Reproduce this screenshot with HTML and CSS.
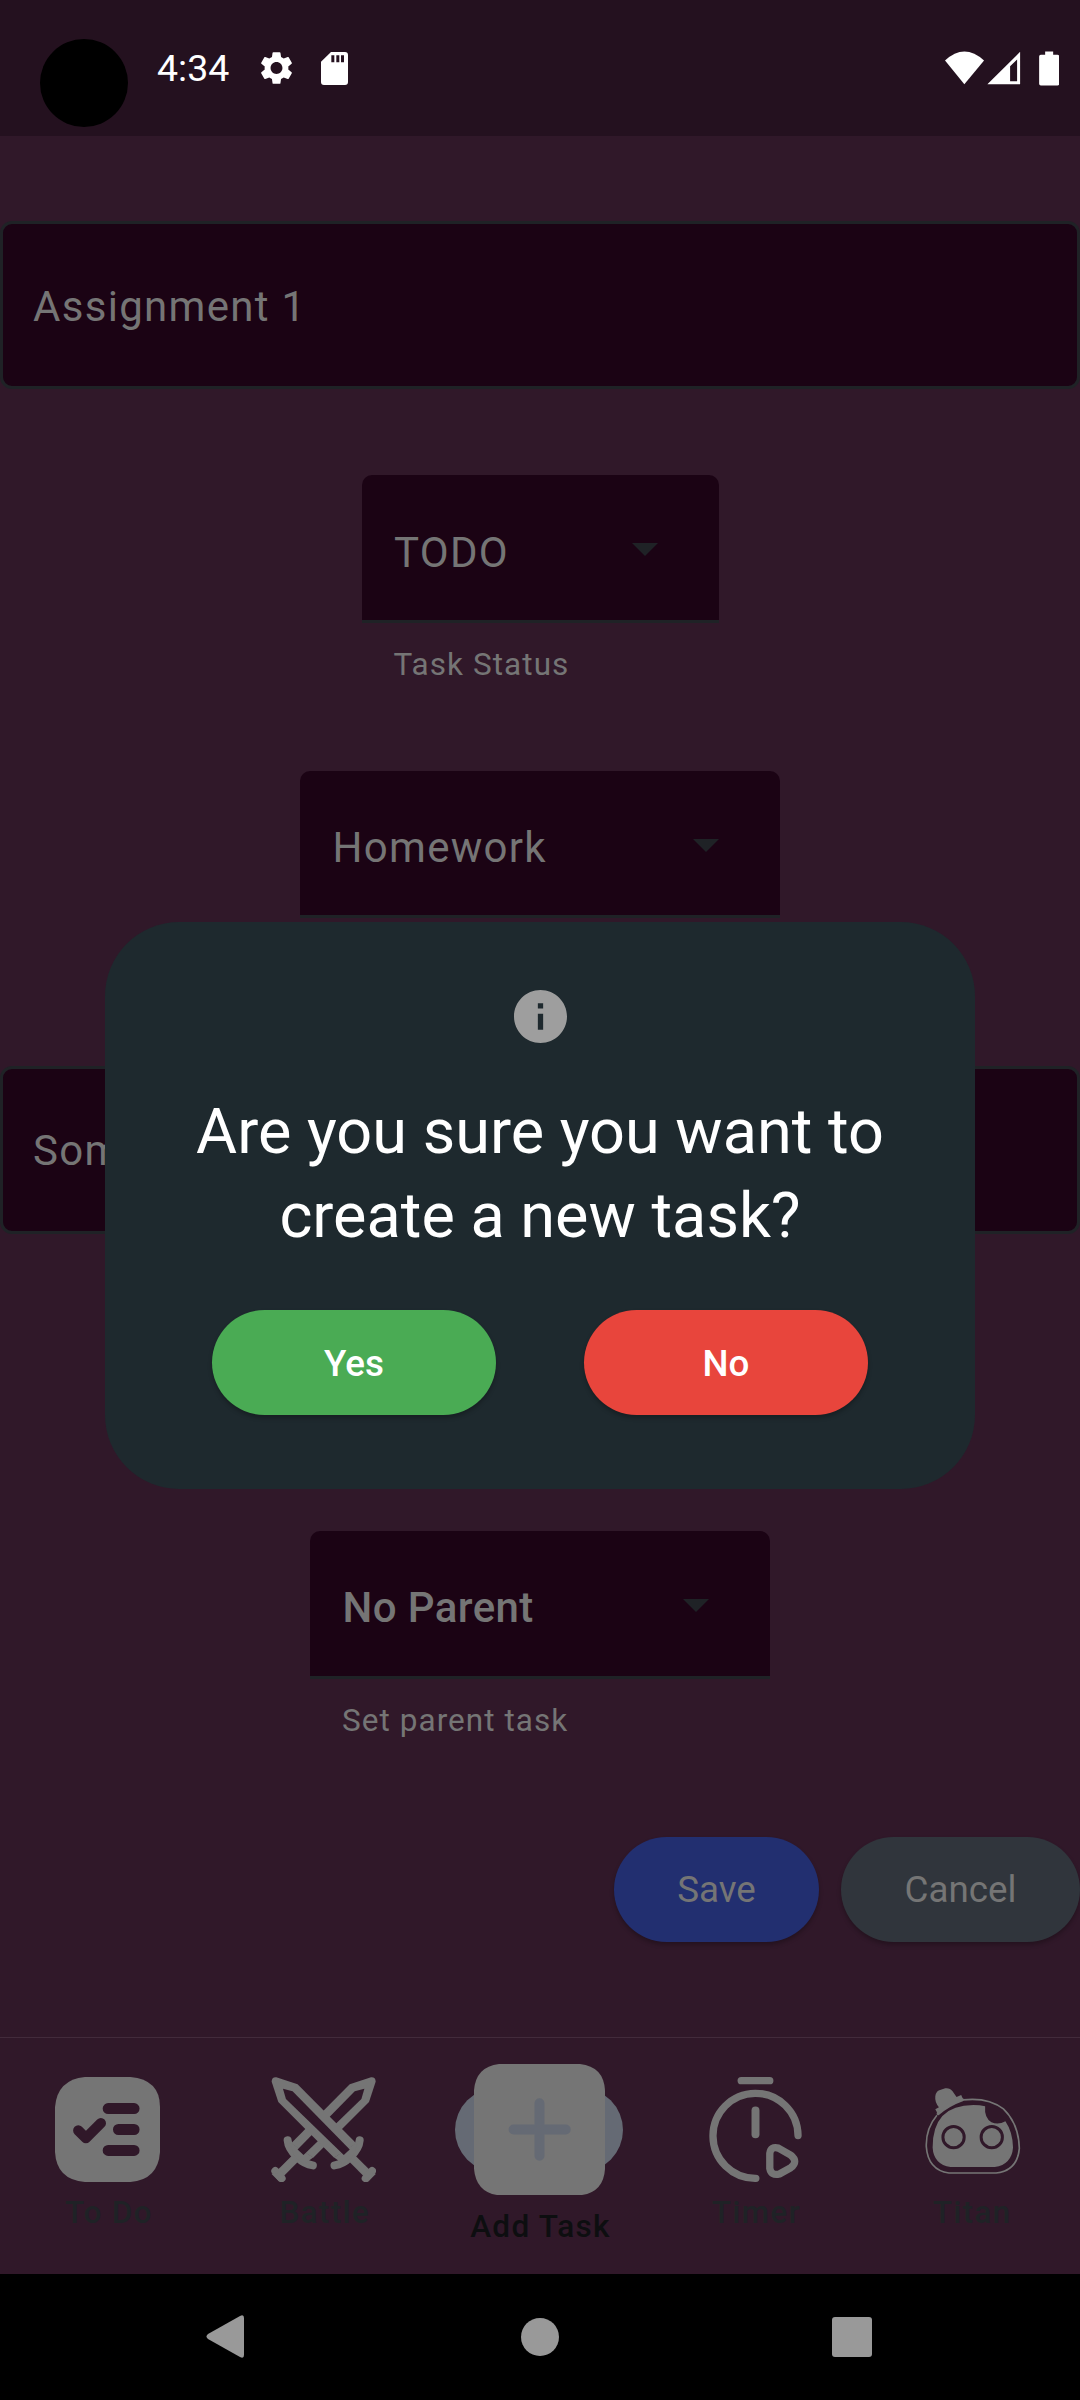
FILE: index.html
```html
<!DOCTYPE html>
<html lang="en">
<head>
<meta charset="utf-8">
<title>New task</title>
<link rel="stylesheet" href="styles.css">
</head>
<body>
<div class="screen">
  <header class="status-bar">
    <span class="camera"></span>
    <span class="clock">4:34</span>
    <svg class="status-gear" viewBox="2 2 20 20"><path fill="#fff" d="M19.14 12.94c.04-.3.06-.61.06-.94 0-.32-.02-.64-.07-.94l2.03-1.58c.18-.14.23-.41.12-.61l-1.92-3.32c-.12-.22-.37-.29-.59-.22l-2.39.96c-.5-.38-1.03-.7-1.62-.94l-.36-2.54c-.04-.24-.24-.41-.48-.41h-3.84c-.24 0-.43.17-.47.41l-.36 2.54c-.59.24-1.13.57-1.62.94l-2.39-.96c-.22-.08-.47 0-.59.22L2.74 8.87c-.12.21-.08.47.12.61l2.03 1.58c-.05.3-.09.63-.09.94s.02.64.07.94l-2.03 1.58c-.18.14-.23.41-.12.61l1.92 3.32c.12.22.37.29.59.22l2.39-.96c.5.38 1.03.7 1.62.94l.36 2.54c.05.24.24.41.48.41h3.84c.24 0 .44-.17.47-.41l.36-2.54c.59-.24 1.13-.56 1.62-.94l2.39.96c.22.08.47 0 .59-.22l1.92-3.32c.12-.22.07-.47-.12-.61l-2.01-1.58zM12 15.6c-1.98 0-3.6-1.62-3.6-3.6s1.62-3.6 3.6-3.6 3.6 1.62 3.6 3.6-1.62 3.6-3.6 3.6z"/></svg>
    <svg class="status-sd" viewBox="0 0 81 99"><path fill="#fff" fill-rule="evenodd" d="M30 0H72Q81 0 81 9V90Q81 99 72 99H9Q0 99 0 90V29ZM31 10V31H40V10ZM46 10V31H55V10ZM60 10V31H69V10Z"/></svg>
    <svg class="status-signals" viewBox="135 152 343 104"><g fill="#fff"><path d="M135 180Q193 126 252 180L193 251Z"/><path fill-rule="evenodd" d="M262 251L360 154V251ZM330 197V242H351V177Z"/><path d="M435 153H459V163H472Q477 163 477 168V250Q477 255 472 255H422Q417 255 417 250V168Q417 163 422 163H435Z"/></g></svg>
  </header>

  <main class="form">
    <div class="text-field">Assignment 1</div>
    <div class="select select-status"><span>TODO</span><i class="arrow"></i></div>
    <div class="hint hint-status">Task Status</div>
    <div class="select select-type"><span>Homework</span><i class="arrow"></i></div>
    <div class="text-field text-field-notes">Some</div>
    <div class="select select-parent"><span>No Parent</span><i class="arrow"></i></div>
    <div class="hint hint-parent">Set parent task</div>
    <div class="actions">
      <button class="pill save">Save</button>
      <button class="pill cancel">Cancel</button>
    </div>
  </main>

  <nav class="tabs">
    <div class="tab">
      <svg viewBox="165 170 316 316"><path fill="#757575" d="M255 170H392Q481 178 481 260V396Q475 480 392 486H255Q170 480 165 396V260Q172 178 255 170Z"/><g stroke="#301829" stroke-width="33" stroke-linecap="round" stroke-linejoin="round" fill="none"><path d="M325 265H403M356 328H403M325 391H403"/><path d="M235 331L258 354L303 309" stroke-width="31"/></g></svg>
      <span>To Do</span>
    </div>
    <div class="tab">
      <svg viewBox="813 170 316 316">
        <defs>
          <g id="sword">
            <path fill="#757575" d="M815 184Q815 170 829 171L893 192L1070 370L1003 413L835 245Z"/>
            <path fill="none" stroke="#757575" stroke-width="24" stroke-linecap="round" d="M1080 360Q1078 386 1051 411Q1030 432 1004 436"/>
            <path fill="#757575" d="M1003 412L1075 365L1058 412L1030 432Z"/>
            <path fill="none" stroke="#757575" stroke-width="26" d="M1055 413L1108 466"/>
            <path fill="none" stroke="#757575" stroke-width="24" stroke-linecap="round" d="M1117 453L1098 475"/>
            <path fill="#757575" d="M1110 462L1129 461L1105 485Z"/>
            <path fill="#301829" d="M849 205L878 213L1050 388L1032 405L858 236Z"/>
          </g>
        </defs>
        <use href="#sword" transform="translate(1943 0) scale(-1 1)"/>
        <use href="#sword"/>
      </svg>
      <span>Battle</span>
    </div>
    <div class="tab tab-active">
      <div class="indicator">
        <svg viewBox="0 0 394 394"><path fill="#757575" d="M75 0H319Q390 8 394 79V315Q390 384 325 394H69Q6 384 0 315V79Q6 8 75 0Z"/><path d="M197 118V276M119 197H276" stroke="#656a74" stroke-width="30" stroke-linecap="round"/></svg>
      </div>
      <span>Add Task</span>
    </div>
    <div class="tab">
      <svg viewBox="70 170 316 316"><g fill="none" stroke="#757575" stroke-width="22" stroke-linecap="round" stroke-linejoin="round"><path d="M185 181H271"/><path d="M228 271V342" stroke-width="24"/><path d="M356 346A128 128 0 1 0 229 475"/><path d="M271 400Q274 378 297 384L334 405Q358 424 334 443L300 462Q275 468 271 445Z"/></g></svg>
      <span>Timer</span>
    </div>
    <div class="tab">
      <svg viewBox="718 170 316 316"><g fill="#757575"><path d="M767 228Q769 214 779 210L797 204Q811 202 819 213L831 230L845 224L849 233Q857 238 850 243Q810 257 777 285Q769 286 772 276L767 267L778 261Q765 246 767 228Z"/><path d="M917 258Q914 293 936 306Q957 315 978 303Q1000 335 1001 382Q997 433 946 441H813Q762 433 759 382Q759 254 882 254Q901 254 917 258Z"/></g><path fill="none" stroke="#757575" stroke-width="5" d="M772 285Q738 325 740 380Q745 450 808 459H950Q1014 452 1020 385Q1018 310 972 266Q925 230 850 239"/><g fill="#757575" stroke="#301829" stroke-width="9"><circle cx="822" cy="351" r="32"/><circle cx="937" cy="351" r="32"/></g></svg>
      <span>Titan</span>
    </div>
  </nav>

  <footer class="system-nav">
    <svg viewBox="0 0 40 44"><path fill="#999" d="M34 1Q38 -1 38 3V40Q38 44 34 42L2 24Q-1 21.500 2 19Z"/></svg>
    <svg viewBox="0 0 40 44"><circle cx="20" cy="22" r="19" fill="#999"/></svg>
    <svg viewBox="0 0 40 44"><rect x="0" y="2" width="40" height="40" rx="3" fill="#999"/></svg>
  </footer>

  <section class="dialog" role="dialog">
    <svg class="info" viewBox="2 2 20 20"><path fill="#9e9e9e" d="M12 2C6.480 2 2 6.480 2 12s4.480 10 10 10 10-4.480 10-10S17.520 2 12 2zm1 15h-2v-6h2v6zm0-8h-2V7h2v2z"/></svg>
    <h1>Are you sure you want to<br>create a new task?</h1>
    <div class="choices">
      <button class="pill yes">Yes</button>
      <button class="pill no">No</button>
    </div>
  </section>
</div>
</body>
</html>
```
FILE: styles.css
```css
* { box-sizing: border-box; }
body { margin: 0; background: #301829; font-family: Roboto, "Noto Sans", sans-serif; }
svg { display: block; flex: none; }
.screen { position: relative; width: 1080px; height: 2400px; overflow: hidden; display: flex; flex-direction: column; background: #301829; }

.status-bar { height: 136px; background: #24111f; display: flex; align-items: flex-start; padding: 0 21px 0 40px; color: #fff; }
.camera { width: 88px; height: 88px; margin-top: 39px; border-radius: 50%; background: #000; }
.clock { margin: 46px 0 0 29px; width: 103px; font-size: 37.500px; line-height: 44px; }
.status-gear { width: 33px; height: 34px; margin-top: 51px; }
.status-sd { width: 27px; height: 33px; margin: 52px 0 0 28px; }
.status-signals { width: 114.500px; height: 35px; margin: 50.500px 0 0 auto; }

.form { height: 1901px; display: flex; flex-direction: column; align-items: center; padding-top: 85px; color: #757575; font-size: 42px; letter-spacing: 1.300px; }
.text-field { width: 100%; height: 168px; flex: none; border: 3px solid #1f2226; border-radius: 12px; background: #1b0314; display: flex; align-items: center; padding: 2px 30px 0; }
.text-field-notes { margin-top: 147.500px; }
.select { height: 147.500px; flex: none; border-bottom: 3px solid #1f2226; border-radius: 10px 10px 0 0; background: #1b0314; display: flex; align-items: center; justify-content: space-between; padding: 10px 61px 0 32.500px; }
.select-status { width: 357px; margin-top: 86px; }
.select-type { width: 480px; margin-top: 76px; }
.select-parent { width: 460px; margin-top: 297.500px; padding-top: 9px; font-weight: 500; letter-spacing: 0.400px; }
.arrow { border: 13px solid transparent; border-top-color: #1f2226; border-bottom: 0; margin-top: -5px; }
.hint { height: 72px; flex: none; padding: 23px 32px 0; font-size: 31.500px; line-height: 38px; letter-spacing: 1.050px; }
.hint-status { width: 357px; }
.hint-parent { width: 460px; }
.actions { align-self: flex-end; display: flex; gap: 22px; margin-top: 86px; }
.pill { height: 105px; border: 0; border-radius: 53px; padding: 1px 0 0; font: 500 36.750px Roboto, sans-serif; box-shadow: 0 3px 4px rgba(0, 0, 0, .25); }
.save { width: 205px; background: #222f70; color: #757575; font-weight: 400; padding: 0; }
.cancel { width: 239px; background: #30353c; color: #757575; font-weight: 400; padding: 0; }

.tabs { height: 237px; border-top: 1px solid #422b3b; display: grid; grid-template-columns: repeat(5, 1fr); padding-right: 1px; }
.tab { display: flex; flex-direction: column; align-items: center; padding-top: 39px; color: #1f2226; font-size: 31.500px; font-weight: 500; line-height: 38px; letter-spacing: 1.300px; white-space: nowrap; }
.tab > svg { width: 105px; height: 105px; }
.tab > span { margin-top: 12px; padding-left: 2px; }
.tab-active { padding-top: 49.500px; color: #0d0e10; }
.tab-active > span { margin-top: 36px; }
.indicator { width: 168px; height: 84px; border-radius: 42px; background: #656a74; display: flex; align-items: center; justify-content: center; }
.indicator svg { width: 131px; height: 131px; }

.system-nav { height: 126px; background: #000; display: grid; grid-template-columns: 40px 40px 40px; column-gap: 273px; justify-content: start; align-items: center; padding-left: 206px; }
.system-nav svg { width: 40px; height: 44px; justify-self: center; }
.system-nav svg:nth-child(2) { margin-left: 2px; }

.dialog { position: absolute; left: 105px; top: 921.500px; width: 870px; height: 567px; border-radius: 74px; background: #1e292e; display: flex; flex-direction: column; align-items: center; padding-top: 68.500px; }
.info { width: 53px; height: 53px; }
.dialog h1 { margin: 47px 0 0; font-size: 63px; line-height: 84px; font-weight: 400; color: #fff; text-align: center; white-space: nowrap; }
.choices { display: flex; gap: 88px; margin-top: 52px; }
.choices .pill { width: 284px; color: #fff; }
.yes { background: #4aab54; }
.no { background: #e8453c; }
```
